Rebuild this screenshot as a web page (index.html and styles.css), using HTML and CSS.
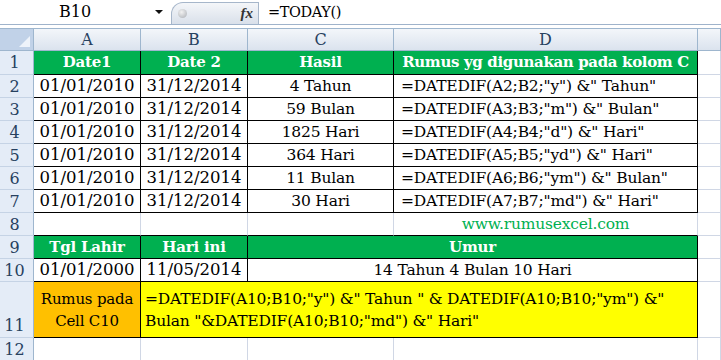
FILE: index.html
```html
<!DOCTYPE html>
<html>
<head>
<meta charset="utf-8">
<link rel="stylesheet" href="styles.css">
</head>
<body>
<div class="fbar">
  <div class="namebox">B10</div>
  <div class="nbarrow"><span class="tri"></span></div>
  <div class="fxpill"><span class="knob"></span><span class="fx">fx</span></div>
  <div class="finput">=TODAY()</div>
</div>
<div class="gap"></div>
<div class="sheet">
  <div class="corner"><span class="ctri"></span></div>
  <div class="ch">A</div><div class="ch">B</div><div class="ch">C</div><div class="ch">D</div><div class="ch">&nbsp;</div>

  <div class="rh">1</div>
  <div class="c hd bk">Date1</div><div class="c hd bk">Date 2</div><div class="c hd bk">Hasil</div><div class="c hd bk long">Rumus yg digunakan pada kolom C</div><div class="c"></div>

  <div class="rh">2</div>
  <div class="c bk d">01/01/2010</div><div class="c bk d">31/12/2014</div><div class="c bk">4 Tahun</div><div class="c bk lft">=DATEDIF(A2;B2;"y") &amp;" Tahun"</div><div class="c"></div>

  <div class="rh">3</div>
  <div class="c bk d">01/01/2010</div><div class="c bk d">31/12/2014</div><div class="c bk">59 Bulan</div><div class="c bk lft">=DATEDIF(A3;B3;"m") &amp;" Bulan"</div><div class="c"></div>

  <div class="rh">4</div>
  <div class="c bk d">01/01/2010</div><div class="c bk d">31/12/2014</div><div class="c bk">1825 Hari</div><div class="c bk lft">=DATEDIF(A4;B4;"d") &amp;" Hari"</div><div class="c"></div>

  <div class="rh">5</div>
  <div class="c bk d">01/01/2010</div><div class="c bk d">31/12/2014</div><div class="c bk">364 Hari</div><div class="c bk lft">=DATEDIF(A5;B5;"yd") &amp;" Hari"</div><div class="c"></div>

  <div class="rh">6</div>
  <div class="c bk d">01/01/2010</div><div class="c bk d">31/12/2014</div><div class="c bk">11 Bulan</div><div class="c bk lft">=DATEDIF(A6;B6;"ym") &amp;" Bulan"</div><div class="c"></div>

  <div class="rh">7</div>
  <div class="c bk d">01/01/2010</div><div class="c bk d">31/12/2014</div><div class="c bk">30 Hari</div><div class="c bk lft">=DATEDIF(A7;B7;"md") &amp;" Hari"</div><div class="c"></div>

  <div class="rh">8</div>
  <div class="c bb"></div><div class="c bb"></div><div class="c bb"></div><div class="c bb web">www.rumusexcel.com</div><div class="c"></div>

  <div class="rh">9</div>
  <div class="c hd bk">Tgl Lahir</div><div class="c hd bk">Hari ini</div><div class="c hd bk span2">Umur</div><div class="c"></div>

  <div class="rh">10</div>
  <div class="c bk d">01/01/2000</div><div class="c bk d">11/05/2014</div><div class="c bk span2">14 Tahun 4 Bulan 10 Hari</div><div class="c"></div>

  <div class="rh tall">11</div>
  <div class="c bk orange">Rumus pada<br>Cell C10</div><div class="c bk yellow span3">=DATEDIF(A10;B10;"y") &amp;" Tahun " &amp; DATEDIF(A10;B10;"ym") &amp;"<br>Bulan "&amp;DATEDIF(A10;B10;"md") &amp;" Hari"</div><div class="c"></div>

  <div class="rh">12</div>
  <div class="c"></div><div class="c"></div><div class="c"></div><div class="c"></div><div class="c"></div>
</div>
</body>
</html>
```
FILE: styles.css
```css
* { box-sizing: border-box; }
html, body { margin: 0; padding: 0; background: #fff; }
body {
  width: 721px;
  height: 360px;
  overflow: hidden;
  font-family: "DejaVu Serif", "Liberation Serif", serif;
  color: #000;
}
.fbar {
  display: flex;
  height: 25px;
  border-bottom: 1px solid #9fb3cb;
  font-size: 16px;
}
.namebox {
  width: 150px;
  text-align: center;
  line-height: 24px;
}
.nbarrow {
  width: 21px;
  display: flex;
  align-items: center;
  justify-content: center;
}
.tri {
  width: 0; height: 0;
  border-left: 4px solid transparent;
  border-right: 4px solid transparent;
  border-top: 4px solid #111;
  margin-left: -3px;
}
.fxpill {
  width: 88px;
  margin-top: 2px;
  height: 22px;
  border: 1px solid #a6b6ca;
  border-bottom: none;
  border-radius: 12px 0 0 0;
  background: linear-gradient(#f4f6f9, #d9e0ea);
  display: flex;
  align-items: center;
  justify-content: space-between;
  padding: 0 5px 0 6px;
}
.knob {
  width: 9px; height: 9px;
  border-radius: 50%;
  background: radial-gradient(circle at 40% 35%, #f2f2f2, #a9adb3);
}
.fx {
  font-style: italic;
  font-family: "Liberation Serif", serif;
  font-size: 15px;
  color: #333;
  font-weight: bold;
}
.finput {
  flex: 1;
  padding-left: 9px;
  line-height: 24px;
  font-size: 14.5px;
  letter-spacing: -0.4px;
}
.gap { height: 4px; border-bottom: 1px solid #9eb6ce; }
.sheet {
  display: grid;
  grid-template-columns: 34px 107px 107px 146px 304px 1fr;
  grid-template-rows: 22px 24px repeat(9, 23px) 56px 23px;
  font-size: 15.5px;
  letter-spacing: -0.2px;
}
.corner {
  background: #c1d2e8;
  border-right: 1px solid #9eb6ce;
  border-bottom: 1px solid #9eb6ce;
  position: relative;
}
.ctri {
  position: absolute;
  right: 3px; bottom: 3px;
  width: 0; height: 0;
  border-left: 11px solid transparent;
  border-bottom: 11px solid #eef3fa;
}
.ch {
  background: linear-gradient(#f3f6fa, #dbe3ee);
  border-right: 1px solid #9eb6ce;
  border-bottom: 1px solid #9eb6ce;
  text-align: center;
  line-height: 21px;
  color: #27415f;
  font-size: 16px;
  letter-spacing: 0;
}
.rh {
  background: #e4ecf7;
  border-right: 1px solid #9eb6ce;
  border-bottom: 1px solid #c5d3e5;
  text-align: center;
  padding-right: 4px;
  line-height: 23px;
  color: #27415f;
  font-size: 16px;
  letter-spacing: 0;
}
.rh.tall { display: flex; align-items: flex-end; justify-content: center; }
.c {
  border-right: 1px solid #d0d7e5;
  border-bottom: 1px solid #d0d7e5;
  white-space: nowrap;
  line-height: 22px;
  text-align: center;
  overflow: hidden;
}
.c.d { font-size: 16.5px; letter-spacing: 0; }
.c.bk { border-right-color: #000; border-bottom-color: #000; }
.c.bb { border-bottom-color: #000; }
.c.hd { background: #00b050; color: #fff; font-weight: bold; font-size: 15px; }
.c.hd.long { font-size: 15px; letter-spacing: -0.35px; }
.lft { text-align: left; padding-left: 7px; }
.web { color: #00b050; border-right-color: #d0d7e5; }
.span2 { grid-column: span 2; }
.span3 { grid-column: span 3; }
.orange {
  background: #ffc000;
  display: flex;
  flex-direction: column;
  justify-content: center;
  align-items: center;
  line-height: 22px;
  font-size: 15px;
}
.yellow {
  background: #ffff00;
  display: flex;
  flex-direction: column;
  justify-content: center;
  text-align: left;
  padding-left: 4px;
  line-height: 22px;
}
```
